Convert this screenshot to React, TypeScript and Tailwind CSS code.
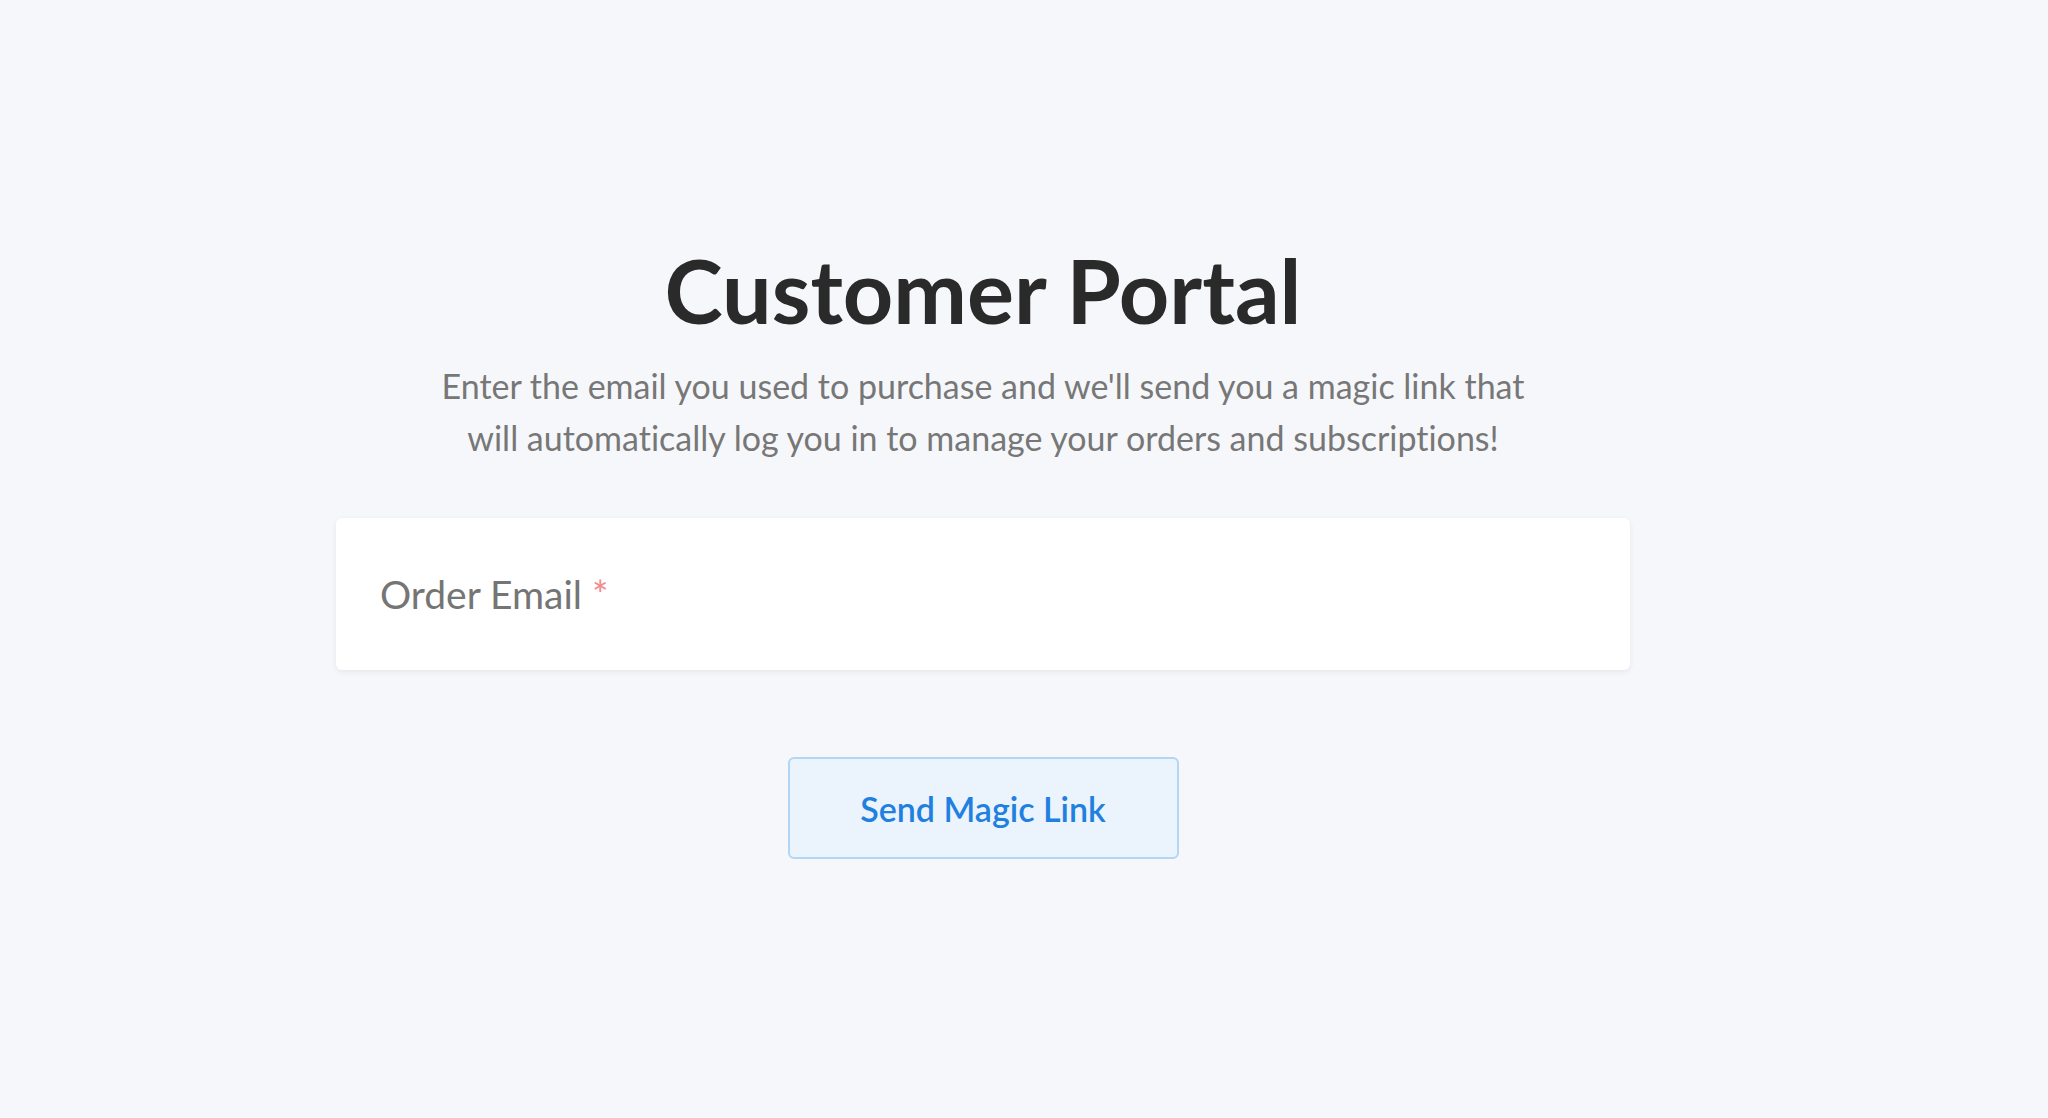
import React from 'react';

function App() {
  return (
    <main className="min-h-screen bg-[#f6f7fb] font-['Lato','Noto_Sans',sans-serif] [font-variant-ligatures:none]">
      <div className="ml-[336px] w-[1294px] pt-[246px] flex flex-col items-center">
        <h1 className="text-[88px] leading-none font-bold text-[#2a2a2a]">Customer Portal</h1>
        <p className="mt-[26px] max-w-[1120px] text-center text-[34px] leading-[52px] text-[#777]">
          Enter the email you used to purchase and we'll send you a magic link that will automatically
          log you in to manage your orders and subscriptions!
        </p>

        <label className="mt-[54px] w-full h-[152px] flex items-center px-[44px] bg-white rounded-md shadow-[0_2px_6px_rgba(0,0,0,0.07)]">
          <span className="text-[39px] text-[#757575]">Order Email</span>
          <span className="ml-[10px] text-[39px] text-[#f28b8b]">*</span>
        </label>

        <button className="mt-[87px] w-[391px] h-[102px] rounded-md border-2 border-[#b3d5f6] bg-[#ebf3fd] text-[34px] font-semibold text-[#1f80e0]">
          Send Magic Link
        </button>
      </div>
    </main>
  );
}

export default App;
